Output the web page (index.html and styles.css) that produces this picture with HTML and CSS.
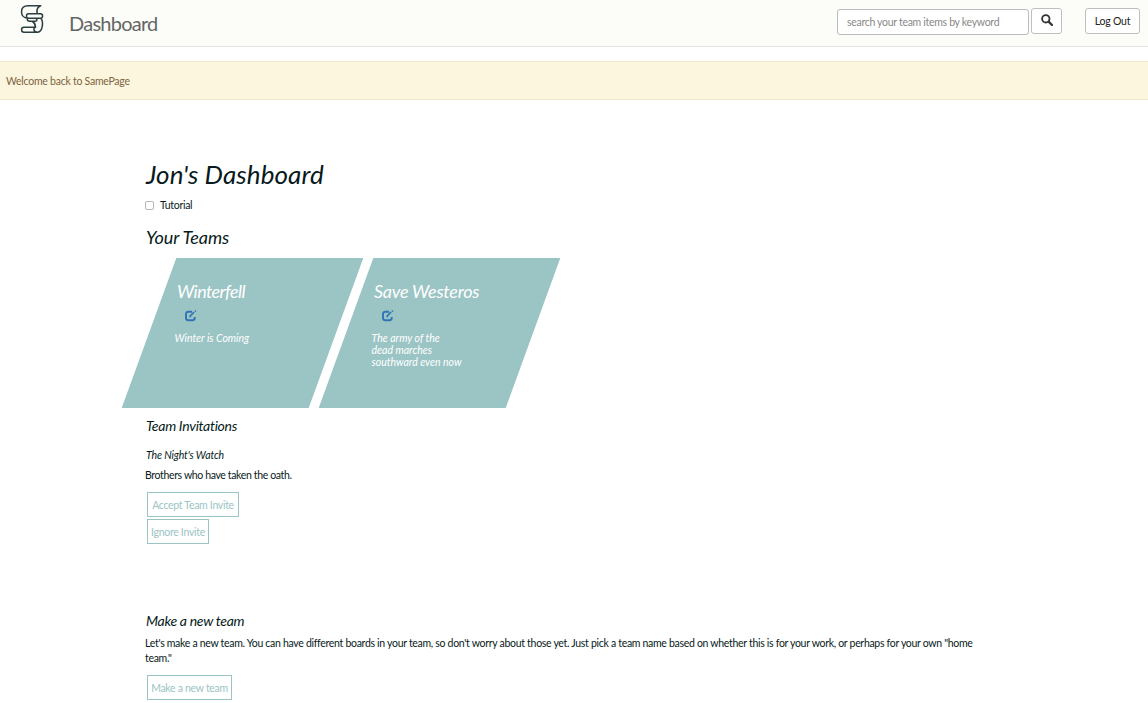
FILE: index.html
```html
<!DOCTYPE html>
<html lang="en">
<head>
<meta charset="utf-8">
<title>Dashboard</title>
<link rel="stylesheet" href="styles.css">
</head>
<body>
<header class="navbar">
  <svg class="logo" width="26" height="32" viewBox="0 0 26 32" fill="none" stroke="#2c3e42" stroke-width="1.500" stroke-linecap="round" stroke-linejoin="round">
    <path d="M21.700 1.800H9C4.500 1.800 2.500 4.500 2.500 8c0 3.500 2.500 6 6 6.300M21.700 1.800C18.200 3 17.500 6 18.200 9.700M9.500 9.700H21.500C24.300 9.700 24.300 14.300 21.500 14.300H9.500C6.800 14.300 6.800 9.700 9.500 9.700M8.500 14.500C7.800 16.500 9 17.200 11 17.200H16.500C18.500 17.200 18.500 14.500 16.500 14.500M22 14.500C24.300 17 24.300 27.500 18.500 28.300H5C1.800 28.300 1.800 23.300 5 23.300H16.500C13.800 24 14.500 28.300 18.500 28.300M13.500 17.500C16 19 16.500 21 16.500 23.300"/>
  </svg>
  <span class="brand">Dashboard</span>
  <form class="search">
    <input class="search-input" type="text" placeholder="search your team items by keyword" aria-label="Search">
    <button class="btn search-btn" type="button" aria-label="Search">
      <svg width="12" height="12" viewBox="0 0 12 12" fill="none" stroke="#333"><circle cx="4.800" cy="4.800" r="3.700" stroke-width="1.800"/><path d="M7.600 7.600L11 11" stroke-width="2.200" stroke-linecap="round"/></svg>
    </button>
  </form>
  <button class="btn logout" type="button">Log Out</button>
</header>
<div class="alert"><span class="alert-text">Welcome back to SamePage</span></div>
<main class="content">
  <h1 class="title">Jon's Dashboard</h1>
  <label class="tutorial"><input class="check" type="checkbox"><span class="tutorial-text">Tutorial</span></label>
  <h2 class="teams-title">Your Teams</h2>
  <section class="teams">
    <article class="team">
      <h3 class="team-name">Winterfell</h3>
      <svg class="edit" width="12" height="12" viewBox="0 0 12 12" fill="none" stroke="#2f74b5"><path d="M7 1.800H3.200Q1 1.800 1 4v4q0 2.200 2.200 2.200h4.300Q9.700 10.200 9.700 8V7" stroke-width="1.900"/><path d="M4.900 7.200L5.500 5.600 9.100 2" stroke-width="1.700"/><path d="M9.900 1.500L10.900.600" stroke-width="1.600"/></svg>
      <p class="team-desc">Winter is Coming</p>
    </article>
    <article class="team">
      <h3 class="team-name save">Save Westeros</h3>
      <svg class="edit" width="12" height="12" viewBox="0 0 12 12" fill="none" stroke="#2f74b5"><path d="M7 1.800H3.200Q1 1.800 1 4v4q0 2.200 2.200 2.200h4.300Q9.700 10.200 9.700 8V7" stroke-width="1.900"/><path d="M4.900 7.200L5.500 5.600 9.100 2" stroke-width="1.700"/><path d="M9.900 1.500L10.900.600" stroke-width="1.600"/></svg>
      <p class="team-desc">The army of the<br>dead marches<br>southward even now</p>
    </article>
  </section>
  <section class="invites">
    <h4 class="subhead">Team Invitations</h4>
    <h5 class="invite-name">The Night's Watch</h5>
    <p class="text oath">Brothers who have taken the oath.</p>
    <button class="action accept" type="button">Accept Team Invite</button>
    <button class="action ignore" type="button">Ignore Invite</button>
  </section>
  <section class="new-team">
    <h4 class="subhead make">Make a new team</h4>
    <p class="text">Let's make a new team. You can have different boards in your team, so don't worry about those yet. Just pick a team name based on whether this is for your work, or perhaps for your own "home<br>team."</p>
    <button class="action create" type="button">Make a new team</button>
  </section>
</main>
</body>
</html>
```
FILE: styles.css
```css
* { box-sizing: border-box; }
body { margin: 0; height: 703px; overflow: hidden; background: #fff; color: #071a20; font-family: Lato, "Open Sans", sans-serif; font-size: 10.5px; line-height: 15px; letter-spacing: -0.3px; }
h1, h2, h3, h4, h5, p { margin: 0; font-weight: 400; white-space: nowrap; }
button, input { font-family: inherit; font-size: inherit; letter-spacing: inherit; }
.navbar { height: 47px; display: flex; align-items: flex-start; padding: 0 8px 0 19px; background: #fcfdf8; border-bottom: 1px solid #e2e4e2; }
.logo { margin-top: 4px; flex: none; }
.brand { margin: 9px 0 0 24px; font-size: 20px; line-height: 28px; letter-spacing: -0.75px; color: #666; }
.search { display: flex; gap: 2px; margin-left: auto; }
.search-input { width: 192px; height: 26px; margin: 9px 0 0; padding: 0 9px 1px; border: 1px solid #bbb; border-radius: 3px; background: #fff; outline: none; }
.search-input::placeholder { color: #888; opacity: 1; }
.btn { height: 26px; margin: 8px 0 0; padding: 0; border: 1px solid #bfbfbf; border-radius: 3px; background: #fff; color: #222; display: flex; align-items: center; justify-content: center; }
.search-btn { width: 31px; padding-bottom: 3px; }
.logout { width: 55px; margin-left: 23px; letter-spacing: -0.2px; }
.alert { height: 39px; margin-top: 14px; padding: 12px 6px 10px; border: solid #f5e8cc; border-width: 1px 0; background: #fcf6df; color: #7d6440; letter-spacing: -0.25px; }
.content { padding: 58px 0 0 145px; }
.title { padding-left: 1px; font-size: 26px; line-height: 32px; font-style: italic; letter-spacing: 0.1px; }
.tutorial { display: flex; align-items: center; height: 15px; margin-top: 8px; gap: 6px; }
.check { appearance: none; width: 9px; height: 9px; margin: 0; border: 1px solid #b5b5b5; border-radius: 2px; background: #fff; }
.teams-title { padding-left: 1px; margin-top: 13px; font-size: 18px; line-height: 22px; font-style: italic; letter-spacing: -0.1px; }
.teams { display: flex; gap: 10px; margin: 10px 0 0 4px; }
.team { position: relative; z-index: 0; width: 187px; height: 150px; padding: 22px 0 0 26px; color: #fff; font-style: italic; }
.team::before { content: ""; position: absolute; inset: 0; z-index: -1; background: #9bc4c4; transform: skewX(-20deg); }
.team-name { padding-left: 2px; font-size: 18px; line-height: 22px; letter-spacing: -0.6px; }
.save { letter-spacing: -0.25px; }
.edit { display: block; margin: 8px 0 0 10px; }
.team-desc { margin: 10px 0 0 -0.5px; line-height: 12px; letter-spacing: 0; }
.invites { padding-top: 10px; }
.subhead { padding-left: 1px; font-size: 14px; line-height: 16px; font-style: italic; letter-spacing: -0.28px; }
.invite-name { padding-left: 1px; margin-top: 14px; font-size: 10.5px; line-height: 15px; font-style: italic; letter-spacing: -0.12px; }
.oath { margin-top: 5px; letter-spacing: -0.36px; }
.action { display: block; height: 25px; margin: 2px 0 0 2px; padding: 0; border: 1px solid #9bc4c4; background: #fff; color: #9bc4c4; text-align: center; white-space: nowrap; }
.accept { width: 92px; margin-top: 9px; }
.ignore { width: 62px; }
.new-team { padding-top: 69px; }
.make { margin-bottom: 7px; }
.create { width: 85px; margin-top: 9px; }
```
